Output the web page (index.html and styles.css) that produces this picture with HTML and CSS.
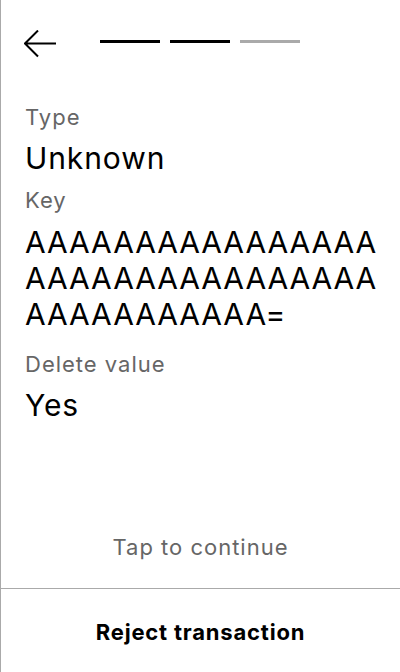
FILE: index.html
```html
<!DOCTYPE html>
<html>
<head>
<meta charset="utf-8">
<link rel="stylesheet" href="styles.css">
</head>
<body>
<div class="screen">
  <div class="header">
    <svg class="back" width="33" height="28" viewBox="0 0 33 28">
      <path d="M1 13.5 H32 M14 0.5 L1 13.5 L14 26.5" fill="none" stroke="#000" stroke-width="2"/>
    </svg>
    <div class="steps">
      <span class="step done"></span>
      <span class="step done"></span>
      <span class="step"></span>
    </div>
  </div>
  <div class="content">
    <div class="label">Type</div>
    <div class="value">Unknown</div>
    <div class="label label-next">Key</div>
    <div class="value value-key">AAAAAAAAAAAAAAAAAAAAAAAAAAAAAAAAAAAAAAAAAAA=</div>
    <div class="label">Delete value</div>
    <div class="value">Yes</div>
  </div>
  <div class="footer">
    <div class="tap">Tap to continue</div>
    <div class="divider"></div>
    <div class="reject">Reject transaction</div>
  </div>
</div>
</body>
</html>
```
FILE: styles.css
```css
html, body {
  margin: 0;
  padding: 0;
  background: #fff;
}
body {
  font-family: Inter, "Noto Sans", sans-serif;
  color: #000;
}
.screen {
  width: 399px;
  height: 672px;
  border-left: 1px solid #aaaaaa;
  display: flex;
  flex-direction: column;
}
.header {
  display: flex;
  padding: 30px 0 0 23px;
  height: 75px;
  box-sizing: border-box;
}
.back {
  display: block;
}
.steps {
  display: flex;
  gap: 10px;
  margin-left: 43px;
  margin-top: 10px;
}
.step {
  display: block;
  width: 60px;
  height: 3px;
  background: #aaaaaa;
}
.step.done {
  background: #000;
}
.content {
  flex: 1;
  padding: 29px 20px 0 24px;
}
.label {
  font-size: 22px;
  line-height: 26px;
  letter-spacing: 1px;
  color: #666666;
}
.value {
  font-size: 30px;
  line-height: 36px;
  letter-spacing: 0.9px;
  margin-top: 10px;
  word-break: break-all;
}
.label-next {
  margin-top: 11px;
}
.value-key {
  margin-top: 11px;
  margin-bottom: 19px;
}
.footer {
  display: flex;
  flex-direction: column;
}
.tap {
  font-size: 22px;
  line-height: 26px;
  letter-spacing: 1px;
  color: #666666;
  text-align: center;
  margin-bottom: 28px;
}
.divider {
  height: 1px;
  background: #aaaaaa;
}
.reject {
  height: 83px;
  box-sizing: border-box;
  padding-top: 30px;
  font-size: 22px;
  line-height: 26px;
  letter-spacing: 0.8px;
  font-weight: 700;
  text-align: center;
}
```
